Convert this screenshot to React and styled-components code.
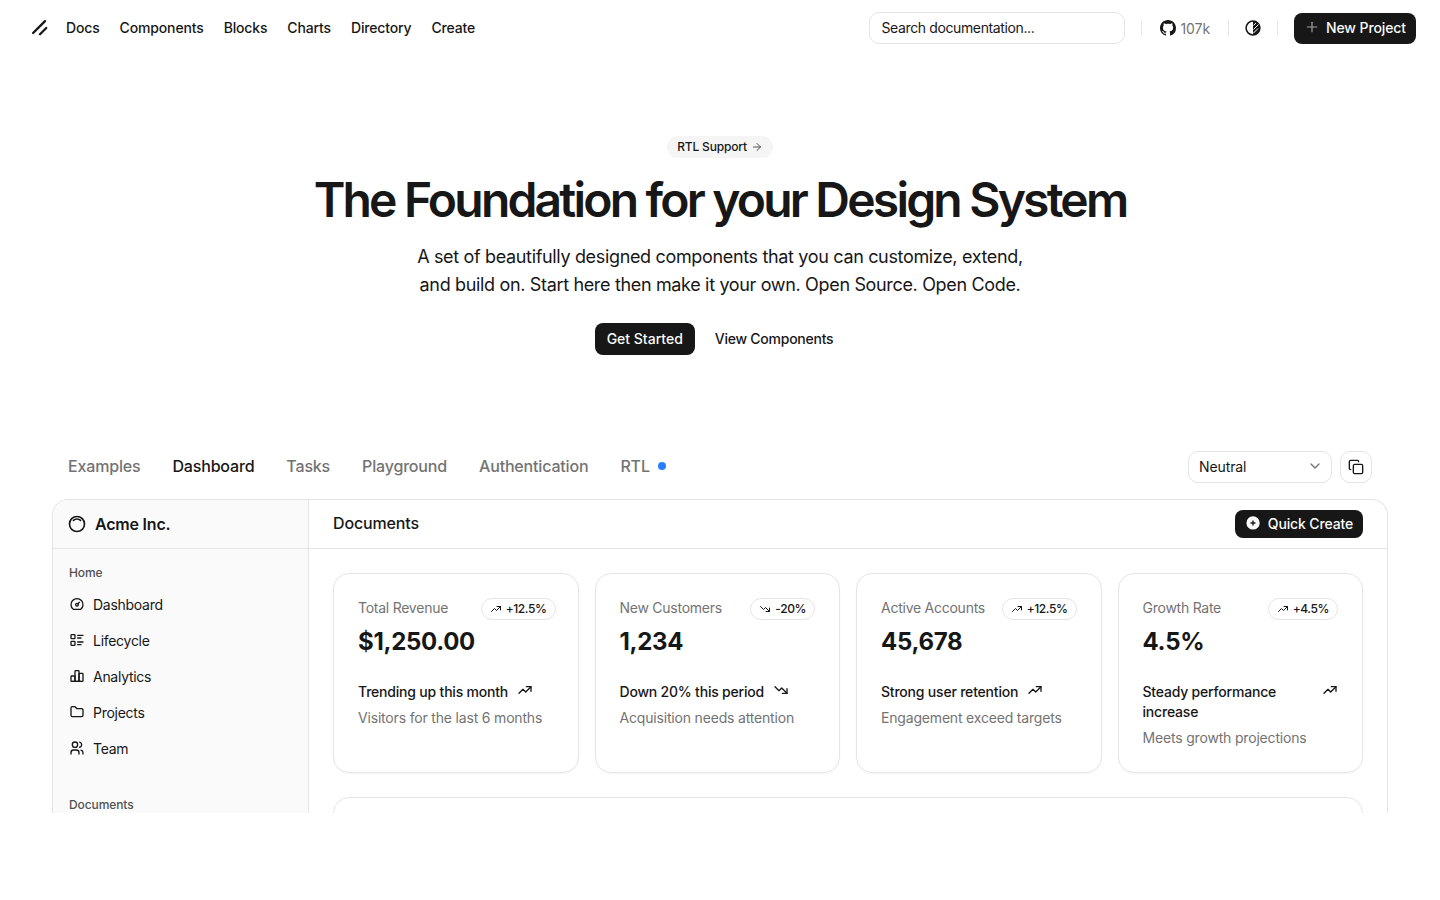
import React from "react";
import styled, { createGlobalStyle } from "styled-components";
import { TbDashboard, TbListDetails, TbChartBar, TbFolder, TbUsers, TbInnerShadowTop, TbCirclePlusFilled, TbTrendingUp, TbTrendingDown } from "react-icons/tb";
import { Plus, ArrowRight, ChevronDown, Copy } from "lucide-react";

const Global = createGlobalStyle`
  html, body { margin: 0; padding: 0; background: #fff; }
  body { font-family: Inter, "Noto Sans", sans-serif; color: #171717; }
  * { box-sizing: border-box; }
`;
const Page = styled.div`height: 900px; overflow: hidden;`;
const Header = styled.header`
  height: 56px; padding: 0 24px; display: flex; align-items: center; justify-content: space-between;
`;
const Left = styled.div`display: flex; align-items: center;`;
const LogoMark = styled.svg`width: 20px; height: 20px; margin: 0 16px 0 6px; display: block;`;
const NavLinks = styled.nav`display: flex; gap: 20px;`;
const NavLink = styled.a`font-size: 14px; font-weight: 500; line-height: 20px; color: #171717; letter-spacing: -0.15px;`;
const Right = styled.div`display: flex; align-items: center;`;
const Search = styled.div`
  width: 256px; height: 32px; border: 1px solid #e5e5e5; border-radius: 10px; padding: 0 12px 2px;
  display: flex; align-items: center; font-size: 14px; color: #171717; letter-spacing: -0.38px;
`;
const Sep = styled.span`width: 1px; height: 16px; background: #e5e5e5; margin: ${p => p.$m || "0 16px"};`;
const Stars = styled.div`
  display: flex; align-items: center; gap: 5px; font-size: 14px; letter-spacing: -0.1px; color: #737373; font-weight: 400; padding: 0 1px 0 2px;
`;
const ThemeIcon = styled.svg`width: 16px; height: 16px; display: block;`;
const DarkBtn = styled.button`
  border: 0; background: #171717; color: #fafafa; font: 500 14px Inter, sans-serif; letter-spacing: ${p => p.$ls || "-0.1px"};
  display: inline-flex; align-items: center; justify-content: center; gap: ${p => p.$gap || 6}px;
  height: ${p => p.$h || 32}px; padding: 0 ${p => p.$px || 10}px 2px; border-radius: 8px;
`;
const Hero = styled.section`
  padding-top: 80px; display: flex; flex-direction: column; align-items: center;
`;
const Pill = styled.div`
  height: 22px; padding: 0 10px 1px; border-radius: 999px; background: #f5f5f5; display: flex; align-items: center; gap: 4px;
  font-size: 12px; font-weight: 500; color: #171717; letter-spacing: -0.18px;
`;
const Title = styled.h1`
  margin: 12px 0 0; font-size: 48px; line-height: 60px; font-weight: 600; letter-spacing: -2.8px; color: #171717;
  font-family: Inter, sans-serif;
`;
const Lead = styled.p`
  margin: 13px 0 0; font-size: 18px; line-height: 28px; text-align: center; color: #171717; letter-spacing: -0.34px; font-weight: 400;
`;
const Actions = styled.div`margin-top: 24px; display: flex; gap: 8px;`;
const GhostBtn = styled.button`
  border: 0; background: transparent; color: #171717; font: 500 14px Inter, sans-serif; letter-spacing: -0.25px;
  height: 32px; padding: 0 12px 2px; border-radius: 8px;
`;
const TabsRow = styled.div`
  margin: 96px 68px 0; height: 32px; display: flex; align-items: center; justify-content: space-between;
`;
const Tabs = styled.div`display: flex; gap: 32px; align-items: center; padding-bottom: 2px;`;
const Tab = styled.span`
  font-size: 16px; font-weight: 500; line-height: 24px; letter-spacing: -0.17px; color: ${p => p.$active ? "#171717" : "#737373"};
  display: inline-flex; align-items: center; gap: 8px;
`;
const Dot = styled.span`width: 8px; height: 8px; border-radius: 50%; background: #2b7fff;`;
const TabTools = styled.div`display: flex; gap: 8px;`;
const Select = styled.div`
  width: 144px; height: 32px; border: 1px solid #e5e5e5; border-radius: 10px; padding: 0 8px 2px 10px;
  display: flex; align-items: center; justify-content: space-between; font-size: 14px; letter-spacing: -0.1px; color: #171717;
`;
const IconBtn = styled.div`
  width: 32px; height: 32px; border: 1px solid #e5e5e5; border-radius: 10px; display: flex; align-items: center; justify-content: center;
`;
const Shell = styled.div`
  margin: 16px 52px 0; height: 314px; overflow: hidden; display: grid; grid-template-columns: 256px 1fr;
  border: 1px solid #e5e5e5; border-bottom: 0; border-radius: 16px 16px 0 0;
`;
const Sidebar = styled.aside`background: #fafafa; border-right: 1px solid #e5e5e5; min-height: 400px;`;
const Brand = styled.div`
  height: 49px; border-bottom: 1px solid #e5e5e5; display: flex; align-items: center; gap: 8px; padding: 0 14px;
  font-size: 16px; font-weight: 600; letter-spacing: -0.2px; color: #171717;
`;
const GroupLabel = styled.div`
  font-size: 12px; font-weight: 500; line-height: 16px; color: #525252; padding: 0 16px; margin-top: ${p => p.$mt}px; letter-spacing: -0.1px;
`;
const MenuList = styled.div`margin-top: 7px; display: flex; flex-direction: column; gap: 4px;`;
const MenuItem = styled.div`
  height: 32px; padding: 0 16px; display: flex; align-items: center; gap: 8px; font-size: 14px; color: #171717; letter-spacing: -0.28px;
`;
const Main = styled.main`min-width: 0;`;
const MainBar = styled.div`
  height: 49px; border-bottom: 1px solid #e5e5e5; display: flex; align-items: center; justify-content: space-between; padding: 0 24px;
`;
const MainTitle = styled.div`font-size: 16px; font-weight: 500; letter-spacing: -0.15px; color: #171717; padding-bottom: 2px;`;
const Cards = styled.div`
  padding: 24px 24px 0; display: grid; grid-template-columns: repeat(4, 1fr); gap: 16px;
`;
const Card = styled.div`
  height: 200px; border: 1px solid #e5e5e5; border-radius: 16px; padding: 24px; display: flex; flex-direction: column;
  box-shadow: 0 1px 2px rgba(0,0,0,.04);
`;
const CardTop = styled.div`display: flex; justify-content: space-between; align-items: flex-start;`;
const CardLabel = styled.div`font-size: 14px; line-height: 20px; color: #737373; letter-spacing: -0.25px;`;
const Badge = styled.span`
  height: 22px; padding: 0 8px 1px; border: 1px solid #e5e5e5; border-radius: 999px; display: inline-flex; align-items: center; gap: 4px;
  font-size: 12px; font-weight: 500; color: #171717; letter-spacing: -0.4px; white-space: nowrap;
  margin-right: ${p => p.$shift || 0}px;
`;
const Value = styled.div`margin-top: 6px; font-size: 24px; line-height: 32px; font-weight: 700; letter-spacing: -0.3px; color: #171717;`;
const Footnote = styled.div`margin-top: 24px; display: flex; gap: 8px; align-items: flex-start; justify-content: ${p => p.$split ? "space-between" : "flex-start"};`;
const FootTitle = styled.div`font-size: 14px; line-height: 20px; font-weight: 500; color: #171717; letter-spacing: -0.2px; max-width: ${p => p.$wrap ? "150px" : "none"};`;
const FootIcon = styled.span`display: flex; flex: none; margin-left: ${p => p.$split ? 0 : 1}px;`;
const FootSub = styled.div`margin-top: 6px; font-size: 14px; line-height: 20px; color: #737373; letter-spacing: -0.18px;`;
const Table = styled.div`margin: 24px 24px 0; height: 200px; border: 1px solid #e5e5e5; border-radius: 16px;`;

const cards = [
  { label: "Total Revenue", badge: "+12.5%", shift: -2, value: "$1,250.00", title: "Trending up this month", sub: "Visitors for the last 6 months" },
  { label: "New Customers", badge: "-20%", down: true, value: "1,234", title: "Down 20% this period", sub: "Acquisition needs attention" },
  { label: "Active Accounts", badge: "+12.5%", value: "45,678", title: "Strong user retention", sub: "Engagement exceed targets" },
  { label: "Growth Rate", badge: "+4.5%", value: "4.5%", title: "Steady performance increase", sub: "Meets growth projections", wrap: true },
];
const menu = [
  ["Dashboard", TbDashboard], ["Lifecycle", TbListDetails], ["Analytics", TbChartBar], ["Projects", TbFolder], ["Team", TbUsers],
];

export default function App() {
  return (
    <Page>
      <Global />
      <Header>
        <Left>
          <LogoMark viewBox="0 0 256 256" fill="none" stroke="#171717" strokeWidth="30" strokeLinecap="round">
            <line x1="208" y1="128" x2="128" y2="208" />
            <line x1="192" y1="40" x2="40" y2="192" />
          </LogoMark>
          <NavLinks>
            {["Docs", "Components", "Blocks", "Charts", "Directory", "Create"].map(n => <NavLink key={n}>{n}</NavLink>)}
          </NavLinks>
        </Left>
        <Right>
          <Search>Search documentation...</Search>
          <Sep />
          <Stars>
            <svg width="16" height="16" viewBox="0 0 16 16" fill="#171717"><path d="M8 0C3.58 0 0 3.58 0 8c0 3.54 2.29 6.53 5.47 7.59.4.07.55-.17.55-.38 0-.19-.01-.82-.01-1.49-2.01.37-2.53-.49-2.69-.94-.09-.23-.48-.94-.82-1.13-.28-.15-.68-.52-.01-.53.63-.01 1.08.58 1.23.82.72 1.21 1.87.87 2.33.66.07-.52.28-.87.51-1.07-1.78-.2-3.64-.89-3.64-3.95 0-.87.31-1.59.82-2.15-.08-.2-.36-1.02.08-2.12 0 0 .67-.21 2.2.82.64-.18 1.32-.27 2-.27s1.36.09 2 .27c1.53-1.04 2.2-.82 2.2-.82.44 1.1.16 1.92.08 2.12.51.56.82 1.27.82 2.15 0 3.07-1.87 3.75-3.65 3.95.29.25.54.73.54 1.48 0 1.07-.01 1.93-.01 2.2 0 .21.15.46.55.38A8.01 8.01 0 0 0 16 8c0-4.42-3.58-8-8-8z" /></svg>
            107k
          </Stars>
          <Sep $m="0 16px 0 17px" />
          <ThemeIcon viewBox="0 0 16 16" fill="none">
            <circle cx="8" cy="8" r="6.9" stroke="#171717" strokeWidth="1.5" />
            <path d="M8 1a7 7 0 0 1 0 14z" fill="#171717" />
            <path d="M8.5 13l4.5-4.5M8.5 9.5l5-5M8.5 5.5l2.5-2.5" stroke="#fff" strokeWidth="1" />
          </ThemeIcon>
          <Sep />
          <DarkBtn $h={31} $px={10}><Plus size={16} color="#a3a3a3" strokeWidth={1.75} />New Project</DarkBtn>
        </Right>
      </Header>
      <Hero>
        <Pill>RTL Support <ArrowRight size={12} color="#525252" /></Pill>
        <Title>The Foundation for your Design System</Title>
        <Lead>A set of beautifully designed components that you can customize, extend,<br />and build on. Start here then make it your own. Open Source. Open Code.</Lead>
        <Actions>
          <DarkBtn $px={12} $ls="0">Get Started</DarkBtn>
          <GhostBtn>View Components</GhostBtn>
        </Actions>
      </Hero>
      <TabsRow>
        <Tabs>
          <Tab>Examples</Tab>
          <Tab $active>Dashboard</Tab>
          <Tab>Tasks</Tab>
          <Tab>Playground</Tab>
          <Tab>Authentication</Tab>
          <Tab>RTL <Dot /></Tab>
        </Tabs>
        <TabTools>
          <Select>Neutral <ChevronDown size={16} color="#737373" /></Select>
          <IconBtn><Copy size={16} color="#171717" /></IconBtn>
        </TabTools>
      </TabsRow>
      <Shell>
        <Sidebar>
          <Brand><TbInnerShadowTop size={20} />Acme Inc.</Brand>
          <GroupLabel $mt={16}>Home</GroupLabel>
          <MenuList>
            {menu.map(([name, Icon]) => <MenuItem key={name}><Icon size={16} />{name}</MenuItem>)}
          </MenuList>
          <GroupLabel $mt={33}>Documents</GroupLabel>
        </Sidebar>
        <Main>
          <MainBar>
            <MainTitle>Documents</MainTitle>
            <DarkBtn $h={28} $px={10} $gap={7} $ls="-0.15px"><TbCirclePlusFilled size={16} />Quick Create</DarkBtn>
          </MainBar>
          <Cards>
            {cards.map(c => {
              const Trend = c.down ? TbTrendingDown : TbTrendingUp;
              return (
                <Card key={c.label}>
                  <CardTop>
                    <CardLabel>{c.label}</CardLabel>
                    <Badge $shift={c.shift}><Trend size={12} />{c.badge}</Badge>
                  </CardTop>
                  <Value>{c.value}</Value>
                  <Footnote $split={c.wrap}>
                    <FootTitle $wrap={c.wrap}>{c.title}</FootTitle>
                    <FootIcon $split={c.wrap}><Trend size={16} /></FootIcon>
                  </Footnote>
                  <FootSub>{c.sub}</FootSub>
                </Card>
              );
            })}
          </Cards>
          <Table />
        </Main>
      </Shell>
    </Page>
  );
}
